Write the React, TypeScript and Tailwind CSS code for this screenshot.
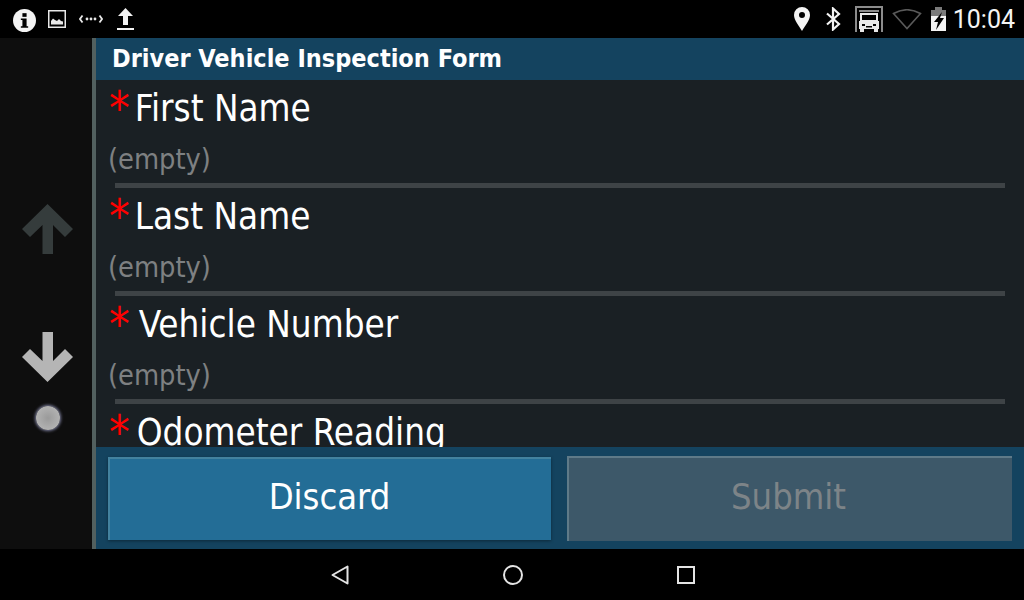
const fields = [
  { label: "First Name", offset: "ml-[5px]" },
  { label: "Last Name", offset: "ml-[5px]" },
  { label: "Vehicle Number", offset: "ml-[9px]" },
  { label: "Odometer Reading", offset: "ml-[7px]" },
];

function Arrow({ down, className }: { down?: boolean; className: string }) {
  return (
    <svg width="51" height="50" viewBox="0 0 51 50" className={className} style={down ? { transform: "scaleY(-1)" } : undefined}>
      <path d="M25.500 0 51 25l-8 8-12-12v29H20.500V21L8 33l-8-8z" fill="currentColor" />
    </svg>
  );
}

function StatusBar() {
  return (
    <div className="flex h-[38px] shrink-0 items-center justify-between bg-black pl-[13px] pr-[9px]">
      <div className="flex items-center">
        <svg width="23" height="23" viewBox="0 0 22 22" className="mt-[2px]">
          <circle cx="11" cy="11" r="11" fill="#f4f4f4" />
          <rect x="9" y="4" width="4" height="3.500" fill="#000" />
          <path d="M7.500 9H13v7.500h1.500V18h-7v-1.500H9V10.500H7.500z" fill="#000" />
        </svg>
        <svg width="18" height="18" viewBox="0 0 18 18" className="ml-[12px] text-[#e8e8e8]">
          <rect x="0.750" y="0.750" width="16.500" height="16.500" fill="none" stroke="currentColor" strokeWidth="1.500" />
          <path d="M3 14.500v-3.500l2-2.500 2 1.500 2 1 2-2 2 2 2 .5v3z" fill="currentColor" />
        </svg>
        <svg width="24" height="10" viewBox="0 0 24 10" className="ml-[13px] text-[#e8e8e8]">
          <path d="M3.500 1.500 1 5l2.500 3.500M20.500 1.500 23 5l-2.500 3.500" fill="none" stroke="currentColor" strokeWidth="1.800" />
          <circle cx="8" cy="5" r="1.400" fill="currentColor" />
          <circle cx="12" cy="5" r="1.400" fill="currentColor" />
          <circle cx="16" cy="5" r="1.400" fill="currentColor" />
        </svg>
        <svg width="17" height="22" viewBox="0 0 17 22" className="ml-[14px] text-[#f4f4f4]">
          <path d="M8.500 0 16 8h-5v9H6V8H1z" fill="currentColor" />
          <rect x="0" y="20" width="17" height="2" fill="currentColor" />
        </svg>
      </div>
      <div className="flex items-center">
        <svg width="16" height="24" viewBox="0 0 16 24" className="ml-[1px] text-[#f4f4f4]">
          <path fillRule="evenodd" d="M8 0a8 8 0 0 1 8 8c0 5-5 11-8 16C5 19 0 13 0 8a8 8 0 0 1 8-8zm0 5a3 3 0 1 0 0 6 3 3 0 0 0 0-6z" fill="currentColor" />
        </svg>
        <svg width="15" height="24" viewBox="0 0 15 24" className="ml-[16px] text-[#f4f4f4]">
          <path d="M1 6.500 13 17l-6 5.500V1.500L13 7 1 17.500" fill="none" stroke="currentColor" strokeWidth="2.200" />
        </svg>
        <svg width="28" height="26" viewBox="0 0 28 26" className="ml-[14px]">
          <path d="M1 26V1h26v25" fill="none" stroke="#8c8c8c" strokeWidth="2" />
          <path d="M4 4h20v2H4z" fill="#8c8c8c" />
          <path d="M6 8h16v7H6z" fill="none" stroke="#e8e8e8" strokeWidth="2" />
          <path d="M4 15h20v8H4z" fill="#e8e8e8" />
          <rect x="7" y="18" width="3" height="2" fill="#000" />
          <rect x="18" y="18" width="3" height="2" fill="#000" />
          <rect x="11" y="20" width="6" height="1.500" fill="#000" />
          <rect x="5" y="23" width="4" height="3" fill="#e8e8e8" />
          <rect x="19" y="23" width="4" height="3" fill="#e8e8e8" />
        </svg>
        <svg width="30" height="21" viewBox="0 0 30 21" className="ml-[9px]">
          <path d="M1.500 4.500Q15-3 28.500 4.500L15 19.500z" fill="none" stroke="#5a5a5a" strokeWidth="1.600" />
        </svg>
        <svg width="15" height="24" viewBox="0 0 15 24" className="ml-[9px]">
          <rect x="4" y="0" width="7" height="3" fill="#7a7a7a" />
          <rect x="0" y="3" width="15" height="6" fill="#7a7a7a" />
          <rect x="0" y="9" width="15" height="15" fill="#f4f4f4" />
          <path d="M11 5 3 15h4l-2 8 8-12H9z" fill="#000" />
        </svg>
        <span className="ml-[7px] font-['Roboto',sans-serif] text-[25px] leading-none text-[#f4f4f4]">10:04</span>
      </div>
    </div>
  );
}

function Field({ label, offset }: { label: string; offset: string }) {
  return (
    <div className="h-[108px] shrink-0">
      <div className="flex h-[54px] items-start pl-[13px]">
        <span className="mt-[6px] text-[46px] leading-[44px] text-[#ff0000]">*</span>
        <span className={`${offset} mt-[2px] text-[36.500px] leading-[54px] text-white`}>{label}</span>
      </div>
      <div className="h-[49px] pl-[12px] text-[28.700px] leading-[51px] text-[#7e8082]">(empty)</div>
      <div className="ml-[19px] mr-[19px] h-[5px] bg-[#3e4346]" />
    </div>
  );
}

export default function App() {
  return (
    <div className="flex h-[600px] w-[1024px] flex-col overflow-hidden bg-black font-['DejaVu_Sans_Condensed','DejaVu_Sans',sans-serif]">
      <StatusBar />
      <div className="flex min-h-0 flex-1">
        <div className="flex w-[92px] shrink-0 flex-col items-center bg-[#0e0e0e] pl-[3px] pt-[166px]">
          <Arrow className="text-[#353c3c]" />
          <Arrow down className="mt-[78px] text-[#b5b5b5]" />
          <div className="mt-[24px] h-[24px] w-[24px] rounded-full bg-[radial-gradient(circle,#9a9a9a,#bcbcbc)] shadow-[0_0_3px_1px_#7c7e9c]" />
        </div>
        <div className="w-[4px] shrink-0 bg-[#52605f]" />
        <div className="flex min-w-0 flex-1 flex-col bg-[#1a2024]">
          <div className="flex h-[42px] shrink-0 items-center bg-[#14435f] pl-[16px] text-[25px] font-bold text-white">
            Driver Vehicle Inspection Form
          </div>
          <div className="flex min-h-0 flex-1 flex-col overflow-hidden">
            {fields.map((field) => (
              <Field key={field.label} {...field} />
            ))}
          </div>
          <div className="flex h-[102px] shrink-0 items-center gap-[16px] bg-[#14435f] pl-[12px] pr-[12px]">
            <button className="h-[83px] w-[443px] border-t-2 border-l-2 border-[#43829f] bg-[#236d96] pb-[4px] pr-[2px] text-[36px] text-white shadow-[0_1px_3px_rgba(0,0,0,0.4)]">
              Discard
            </button>
            <button className="h-[85px] w-[445px] border-t-2 border-l-2 border-[#5f7a88] bg-[#3d5869] pb-[4px] pr-[4px] text-[36px] text-[#7d8488]">
              Submit
            </button>
          </div>
        </div>
      </div>
      <div className="flex h-[51px] shrink-0 items-center justify-center bg-black pl-[1px]">
        <svg width="18" height="20" viewBox="0 0 18 20">
          <path d="M16.500 1.500v17L1.500 10z" fill="none" stroke="#e4e4e4" strokeWidth="2" strokeLinejoin="round" />
        </svg>
        <svg width="20" height="20" viewBox="0 0 20 20" className="ml-[154px]">
          <circle cx="10" cy="10" r="9" fill="none" stroke="#e4e4e4" strokeWidth="2" />
        </svg>
        <svg width="18" height="18" viewBox="0 0 18 18" className="ml-[154px]">
          <rect x="1" y="1" width="16" height="16" fill="none" stroke="#e4e4e4" strokeWidth="2" />
        </svg>
      </div>
    </div>
  );
}
